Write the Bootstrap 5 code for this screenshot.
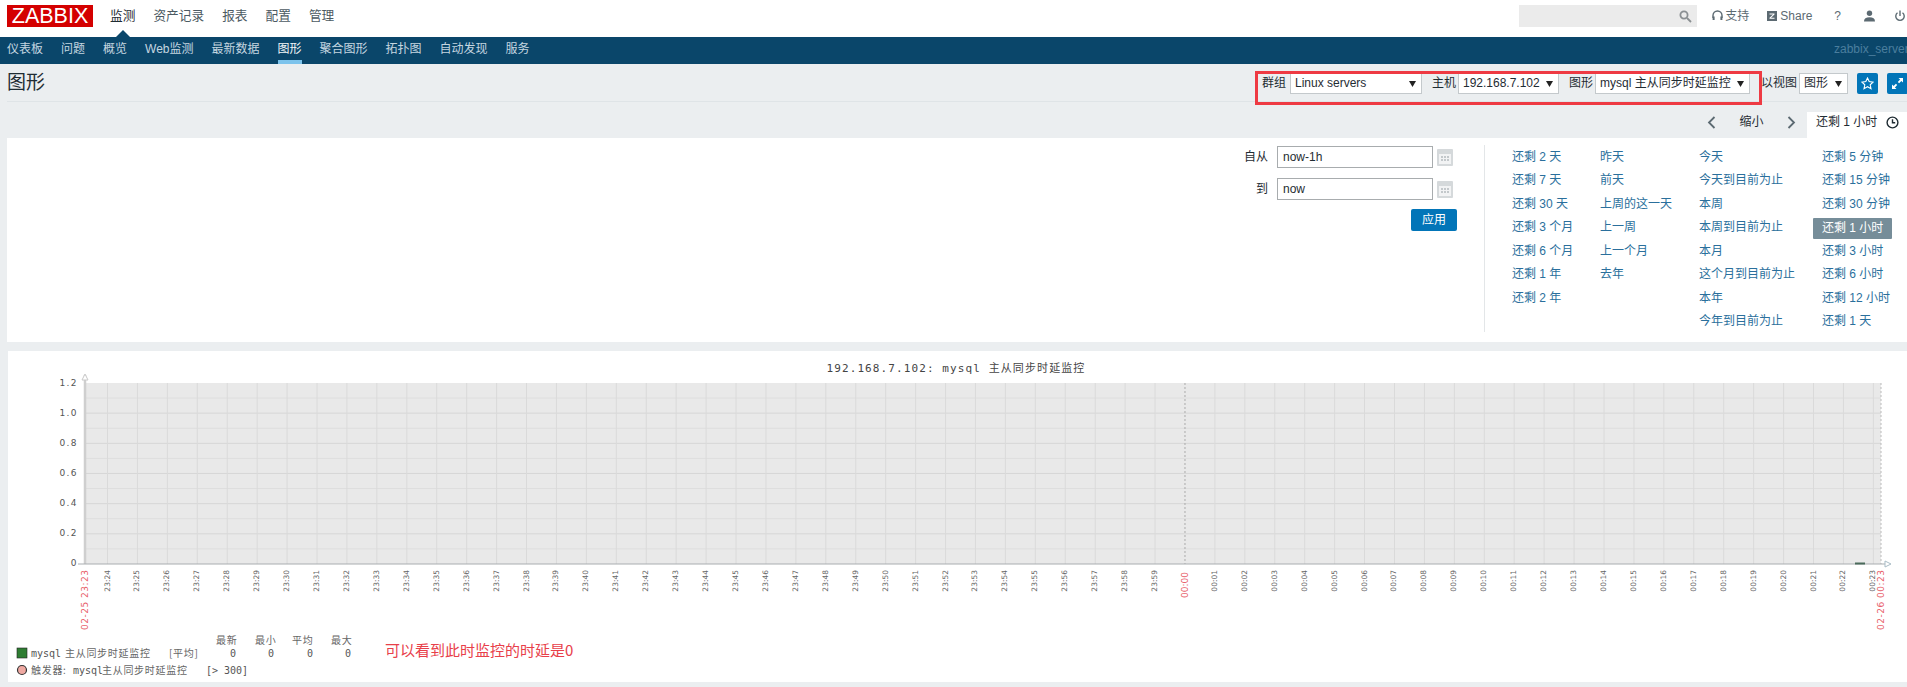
<!DOCTYPE html>
<html lang="zh">
<head>
<meta charset="utf-8">
<title>图形</title>
<link href="https://cdn.jsdelivr.net/npm/bootstrap@5.3.0/dist/css/bootstrap.min.css" rel="stylesheet">
<style>
html,body{height:687px;overflow:hidden}
body{background:#ebeef0;color:#1f2c33;font:12px/1.2 "Liberation Sans","Noto Sans CJK SC",sans-serif}
a{text-decoration:none;color:inherit}
.topbar{height:37px;background:#fff;padding:5px 0 0 7px}
.logo{width:86px;height:22px;background:#d40000;color:#fff;font-size:21.5px;line-height:22px;text-align:center;letter-spacing:0;margin-right:17px}
.mainlinks{gap:18px;font-size:12.7px;line-height:22px;color:#4c5a62}
.mainlinks .cur{position:relative;color:#1f2c33}
.mainlinks .cur::after{content:"";position:absolute;left:50%;margin-left:-7px;top:25px;border:7px solid transparent;border-top:0;border-bottom-color:#0a466a}
.searchbox{width:178px;height:22px;background:#ebebeb;padding-right:5px}
.tools{color:#5c6a72;font-size:12px;line-height:22px;padding-right:2px}
.subbar{height:27px;background:#0a466a;padding-left:7px;color:#c5d6e0;font-size:12px;line-height:25px;overflow:hidden}
.subbar .sublinks{gap:18px}
.subbar .cur{color:#f2f6f8;position:relative;height:27px}
.subbar .cur::after{content:"";position:absolute;left:0;right:0;bottom:0;height:4px;background:#7cc3ec}
.hostname{color:#4a7e9e;width:73px;white-space:nowrap;overflow:hidden}
.headrow{height:38px;margin-left:7px;border-bottom:1px solid #dfe4e7;padding-top:9px;position:relative}
.headrow h1{font-size:19px;font-weight:400;margin:-1px 0 0;line-height:22px;color:#1f2c33}
.fld{color:#1f2c33;font-size:12px;margin-right:-1px}
.zsel{height:21px;padding:0 14px 0 4px;border:1px solid #c4c9cc;border-radius:0;font:12px/19px "Liberation Sans","Noto Sans CJK SC",sans-serif;color:#1f2c33;background-color:#fff;background-image:url("data:image/svg+xml,%3Csvg xmlns='http://www.w3.org/2000/svg' width='7' height='6'%3E%3Cpath d='M0 0h7L3.500 6z' fill='%23222'/%3E%3C/svg%3E");background-position:right 5px center;background-size:7px 6px;background-repeat:no-repeat;appearance:none;box-shadow:none}
.w-a{width:132px}.w-b{width:101px}.w-c{width:155px}.w-d{width:49px}
.lbl-gap{margin:0 2px 0 0}
.sqbtn{width:21px;height:21px;background:#0275b8;border-radius:2px;padding:0}
.redmark{position:absolute;left:1248px;top:7px;width:507px;height:34px;border:3px solid #ee3a43;pointer-events:none}
.timerow{height:36px;padding-top:10px;color:#1f2c33}
.timetab{width:100px;height:26px;background:#fff;padding-left:9px;line-height:16px;padding-top:2px;margin-left:11px}
.filterbox{height:204px;margin-left:7px;background:#fff}
.formcol{width:213px;margin-left:auto;padding-top:8px}
.frow{height:22px;margin-bottom:10px}
.frow label{width:24px;text-align:right;margin-right:9px}
.dateinp{width:156px;height:22px;padding:0 5px;border:1px solid #a8acae;border-radius:0;font:12px "Liberation Sans",sans-serif;color:#1f2c33;box-shadow:none}
.applybtn{width:46px;height:22px;background:#0275b8;color:#fff;border-radius:2px;font-size:12px;line-height:22px;padding:0;border:0;margin-top:-1px}
.ranges{margin:7px 0 10px 27px;border-left:1px solid #e3e6e8;padding:1px 0 0 27px;line-height:23.45px;color:#2a6f9c;width:423px;font-size:12px}
.rc1{width:88px}.rc2{width:99px}.rc3{width:123px}.rc4{width:85px}
.ranges a{display:block;white-space:nowrap}
.ranges a.on{background:#768d99;color:#fff;margin:1.5px 0 .95px -9px;padding:0 0 0 9px;width:79px;height:21px;line-height:21px;border-radius:1px}
.graphbox{height:331px;margin:9px 0 0 8px;background:#fff}
.graphbox svg{display:block}
.t-y{font:9px "DejaVu Sans",sans-serif;letter-spacing:1.4px;fill:#555;text-anchor:end}
.t-x{font:7.5px "DejaVu Sans",sans-serif;fill:#666;text-anchor:end}
.t-r{font:9px "DejaVu Sans",sans-serif;fill:#e8606a;text-anchor:end}
.t-m{font:10px "DejaVu Sans Mono","Noto Sans CJK SC",monospace;fill:#555}
.t-c{font:10px "Noto Sans CJK SC",sans-serif;letter-spacing:.7px;fill:#666}
.t-ttl{font:11px "DejaVu Sans Mono","Noto Sans CJK SC",monospace;letter-spacing:1.1px;fill:#444;text-anchor:middle}
.t-note{font:15px "Noto Sans CJK SC",sans-serif;fill:#e8404a}
</style>
</head>
<body>
<header class="topbar d-flex">
  <a class="logo d-block" href="#">ZABBIX</a>
  <nav class="mainlinks d-flex">
    <a class="cur" href="#">监测</a><a href="#">资产记录</a><a href="#">报表</a><a href="#">配置</a><a href="#">管理</a>
  </nav>
  <div class="ms-auto d-flex align-items-start tools">
    <div class="searchbox d-flex align-items-center justify-content-end">
      <svg width="13" height="13" viewBox="0 0 13 13" fill="none" stroke="#8a8f92" stroke-width="1.8"><circle cx="5" cy="5" r="3.6"/><path d="M8 8l4 4"/></svg>
    </div>
    <a class="d-flex align-items-center" href="#" style="margin-left:15px">
      <svg width="11" height="12" viewBox="0 0 11 12" fill="none" stroke="#5c6a72" stroke-width="1.4" style="margin-right:2px"><path d="M1 8V5.500a4.500 4.500 0 0 1 9 0V8"/><rect x=".6" y="6.500" width="2" height="3.500" fill="#5c6a72" stroke="none"/><rect x="8.400" y="6.500" width="2" height="3.500" fill="#5c6a72" stroke="none"/></svg>支持</a>
    <a class="d-flex align-items-center" href="#" style="margin-left:18px">
      <svg width="10" height="10" viewBox="0 0 10 10" style="margin-right:3px"><rect width="10" height="10" fill="#5c6a72"/><path d="M2.500 2.500h5v1L4 6.800h3.500v1h-5v-1L6 3.500H2.500z" fill="#fff"/></svg>Share</a>
    <a href="#" style="margin-left:22px">?</a>
    <a class="d-flex align-items-center" href="#" style="margin-left:23px;height:22px">
      <svg width="11" height="12" viewBox="0 0 11 12" fill="#5c6a72"><circle cx="5.500" cy="3.200" r="2.700"/><path d="M0 11.500c0-3 2-4.300 5.500-4.300S11 8.500 11 11.500z"/></svg></a>
    <a class="d-flex align-items-center" href="#" style="margin-left:20px;height:22px">
      <svg width="10" height="12" viewBox="0 0 10 12" fill="none" stroke="#5c6a72" stroke-width="1.4"><path d="M5 .5V6M2.500 2.800a4.200 4.200 0 1 0 5 0"/></svg></a>
  </div>
</header>
<nav class="subbar d-flex justify-content-between">
  <div class="sublinks d-flex">
    <a href="#">仪表板</a><a href="#">问题</a><a href="#">概览</a><a href="#">Web监测</a><a href="#">最新数据</a><a class="cur" href="#">图形</a><a href="#">聚合图形</a><a href="#">拓扑图</a><a href="#">自动发现</a><a href="#">服务</a>
  </div>
  <div class="hostname">zabbix_server</div>
</nav>
<main>
  <div class="headrow d-flex justify-content-between">
    <h1>图形</h1>
    <form class="d-flex align-items-start fld">
      <span style="margin-right:4px;line-height:21px">群组</span>
      <select class="form-select zsel w-a"><option>Linux servers</option></select>
      <span class="lbl-gap" style="margin-left:10px;line-height:21px">主机</span>
      <select class="form-select zsel w-b"><option>192.168.7.102</option></select>
      <span class="lbl-gap" style="margin-left:10px;line-height:21px">图形</span>
      <select class="form-select zsel w-c"><option>mysql 主从同步时延监控</option></select>
      <span style="margin-left:11px;margin-right:2px;line-height:21px">以视图</span>
      <select class="form-select zsel w-d"><option>图形</option></select>
      <button type="button" class="btn sqbtn d-flex align-items-center justify-content-center" style="margin-left:9px" aria-label="收藏">
        <svg width="13" height="13" viewBox="0 0 13 13" fill="none" stroke="#fff" stroke-width="1.1"><path d="M6.500 1l1.700 3.600 3.900.5-2.900 2.700.8 3.900-3.500-2-3.500 2 .8-3.900L.9 5.100l3.900-.5z"/></svg></button>
      <button type="button" class="btn sqbtn d-flex align-items-center justify-content-center" style="margin-left:9px" aria-label="全屏">
        <svg width="13" height="13" viewBox="0 0 13 13" fill="#fff"><path d="M7.500 1H12v4.500l-1.600-1.600-2.300 2.300L6.800 5l2.300-2.400zM5.500 12H1V7.500l1.600 1.600 2.300-2.300 1.300 1.200-2.300 2.400z"/></svg></button>
    </form>
    <div class="redmark"></div>
  </div>
  <div class="timerow d-flex justify-content-end">
    <div class="d-flex align-items-start" style="height:26px;line-height:16px;">
      <a class="d-flex align-items-center" href="#" style="height:20px"><svg width="9" height="13" viewBox="0 0 9 13" fill="none" stroke="#5c6a72" stroke-width="1.8"><path d="M7.500 1L2 6.500 7.500 12"/></svg></a>
      <a href="#" style="margin:2px 23.500px 0">缩小</a>
      <a class="d-flex align-items-center" href="#" style="height:20px"><svg width="9" height="13" viewBox="0 0 9 13" fill="none" stroke="#5c6a72" stroke-width="1.8"><path d="M1.500 1L7 6.500 1.500 12"/></svg></a>
      <div class="timetab d-flex align-items-start">还剩 1 小时
        <svg class="ms-auto" style="margin:2px 8px 0 0" width="13" height="13" viewBox="0 0 13 13" fill="none" stroke="#1f2c33" stroke-width="1.4"><circle cx="6.500" cy="6.500" r="5.400"/><path d="M6.500 3.300v3.500h2.700"/></svg>
      </div>
    </div>
  </div>
  <section class="filterbox d-flex">
    <form class="formcol">
      <div class="frow d-flex align-items-center">
        <label>自从</label><input class="form-control dateinp" value="now-1h">
        <svg class="ms-1" width="16" height="17" viewBox="0 0 16 17"><rect width="16" height="17" rx="1" fill="#d5d9db"/><rect x="2" y="5" width="12" height="10" fill="#f2f3f4"/><path d="M4 7h2v2H4zM7 7h2v2H7zM10 7h2v2h-2zM4 10h2v2H4zM7 10h2v2H7zM10 10h2v2h-2z" fill="#c3c8cb"/></svg>
      </div>
      <div class="frow d-flex align-items-center" style="margin-bottom:10px">
        <label>到</label><input class="form-control dateinp" value="now">
        <svg class="ms-1" width="16" height="17" viewBox="0 0 16 17"><rect width="16" height="17" rx="1" fill="#d5d9db"/><rect x="2" y="5" width="12" height="10" fill="#f2f3f4"/><path d="M4 7h2v2H4zM7 7h2v2H7zM10 7h2v2h-2zM4 10h2v2H4zM7 10h2v2H7zM10 10h2v2h-2z" fill="#c3c8cb"/></svg>
      </div>
      <div class="d-flex justify-content-end"><button type="button" class="btn applybtn">应用</button></div>
    </form>
    <div class="ranges d-flex">
      <div class="rc1"><a href="#">还剩 2 天</a><a href="#">还剩 7 天</a><a href="#">还剩 30 天</a><a href="#">还剩 3 个月</a><a href="#">还剩 6 个月</a><a href="#">还剩 1 年</a><a href="#">还剩 2 年</a></div>
      <div class="rc2"><a href="#">昨天</a><a href="#">前天</a><a href="#">上周的这一天</a><a href="#">上一周</a><a href="#">上一个月</a><a href="#">去年</a></div>
      <div class="rc3"><a href="#">今天</a><a href="#">今天到目前为止</a><a href="#">本周</a><a href="#">本周到目前为止</a><a href="#">本月</a><a href="#">这个月到目前为止</a><a href="#">本年</a><a href="#">今年到目前为止</a></div>
      <div class="rc4"><a href="#">还剩 5 分钟</a><a href="#">还剩 15 分钟</a><a href="#">还剩 30 分钟</a><a class="on" href="#">还剩 1 小时</a><a href="#">还剩 3 小时</a><a href="#">还剩 6 小时</a><a href="#">还剩 12 小时</a><a href="#">还剩 1 天</a></div>
    </div>
  </section>
  <section class="graphbox">
    <svg id="chart" width="1899" height="331" viewBox="8 351 1899 331" xmlns="http://www.w3.org/2000/svg">
      <text class="t-ttl" x="956" y="372">192.168.7.102: mysql 主从同步时延监控</text>
      <rect x="85" y="383" width="1796" height="181" fill="#e9e9e9"/>
      <g id="grid"></g>
      <path d="M85 375V564" stroke="#cfcfcf" stroke-width="2.500"/>
      <path d="M82 380l3-6 3 6z" fill="#fff" stroke="#c9c9c9"/>
      <path d="M78 564H1889" stroke="#a9adb0"/>
      <path d="M1885 561l6 3-6 3z" fill="#fff" stroke="#a9bcc6"/>
      <path d="M1855 563.500h10" stroke="#4a6a5a" stroke-width="2"/>
      <g id="labels"></g>
      <text class="t-r" transform="translate(88,570) rotate(-90)" textLength="60">02-25 23:23</text>
      <text class="t-r" transform="translate(1884,570) rotate(-90)" textLength="60">02-26 00:23</text>
      <rect x="17" y="648" width="10" height="10" fill="#2e7d32" stroke="#222" stroke-width=".6"/>
      <text class="t-m" x="31" y="657">mysql</text>
      <text class="t-c" x="65" y="657">主从同步时延监控</text>
      <text class="t-c" x="169" y="657">[平均]</text>
      <text class="t-c" x="216" y="644">最新</text><text class="t-c" x="255" y="644">最小</text><text class="t-c" x="292" y="644">平均</text><text class="t-c" x="331" y="644">最大</text>
      <text class="t-m" x="230" y="657">0</text><text class="t-m" x="268" y="657">0</text><text class="t-m" x="307" y="657">0</text><text class="t-m" x="345" y="657">0</text>
      <circle cx="22" cy="670" r="4.500" fill="#efa9a2" stroke="#333" stroke-width="1.200"/>
      <text class="t-c" x="31" y="674">触发器:</text>
      <text class="t-m" x="73" y="674">mysql</text>
      <text class="t-c" x="102" y="674">主从同步时延监控</text>
      <text class="t-m" x="206" y="674">[&gt; 300]</text>
      <text class="t-note" x="385" y="656">可以看到此时监控的时延是0</text>
    </svg>
  </section>
</main>
<script src="https://cdn.jsdelivr.net/npm/bootstrap@5.3.0/dist/js/bootstrap.bundle.min.js"></script>
<script>
(function(){
  var g='',l='',i,x,h,m,name;
  for(i=1;i<12;i++){var y=383+i*15.08;g+='<path d="M85 '+y+'H1881" stroke="'+(i%2?'#dedede':'#d6d6d6')+'"/>';}
  for(i=0;i<60;i++){
    x=107.5+i*29.93;
    m=(24+i)%60;h=(24+i)>=60?'00':'23';
    name=h+':'+(m<10?'0':'')+m;
    if(name==='00:00'){
      g+='<path d="M'+x+' 383V564" stroke="#aaa" stroke-dasharray="2 2"/>';
      l+='<text class="t-r" transform="translate('+(x+3)+',572) rotate(-90)">'+name+'</text>';
    }else{
      g+='<path d="M'+x+' 383V564" stroke="#dadada"/>';
      l+='<text class="t-x" transform="translate('+(x+2)+',570) rotate(-90)">'+name+'</text>';
    }
  }
  g+='<path d="M1881 383V564" stroke="#bbb" stroke-dasharray="2 2"/>';
  ['1.2','1.0','0.8','0.6','0.4','0.2','0'].forEach(function(t,k){
    l+='<text class="t-y" x="78" y="'+(386+k*30)+'">'+t+'</text>';
  });
  document.getElementById('grid').innerHTML=g;
  document.getElementById('labels').innerHTML=l;
})();
</script>
</body>
</html>
